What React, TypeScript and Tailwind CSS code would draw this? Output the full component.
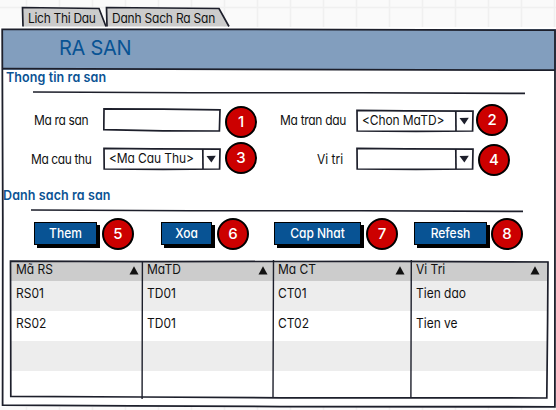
import type { ReactNode } from "react";

const INK = "#1d1f2b";

function T({ className = "", children }: { className?: string; children: ReactNode }) {
  return <span className={`inline-block origin-center scale-y-[1.1] whitespace-nowrap ${className}`}>{children}</span>;
}

function Badge({ n, className = "" }: { n: number; className?: string }) {
  return (
    <span
      className={`flex size-8 shrink-0 items-center justify-center rounded-full border-2 border-black bg-[#cc0000] pb-px text-[15px] leading-none font-medium text-white ${className}`}
    >
      {n}
    </span>
  );
}

function Tab({ width, slant, className, children }: { width: number; slant: number; className: string; children: ReactNode }) {
  return (
    <div className={`relative h-5 shrink-0 ${className}`}>
      <svg className="absolute inset-0 overflow-visible" width={width} height={20} fill="none">
        <path d={`M1 19.5 L.5 .5 L${width - slant} 1.5 L${width} 19.5Z`} fill="#cccccc" />
        <path d={`M1 19.5 L.5 .5 L${width - slant} 1.5 L${width} 19.5`} stroke={INK} strokeWidth="1.7" />
      </svg>
      <span className="relative block pt-1 pl-[6px] text-[12px] leading-4">{children}</span>
    </div>
  );
}

function Rule({ className }: { className: string }) {
  return (
    <svg className={`block h-1 w-[492px] ${className}`} viewBox="0 0 492 4">
      <path d="M0 1 L160 1.8 L330 1.7 L492 2.4" stroke={INK} strokeWidth="1.6" fill="none" />
    </svg>
  );
}

function Field({ select, tilt, className = "", children }: { select?: boolean; tilt?: boolean; className?: string; children?: ReactNode }) {
  return (
    <div className={`relative h-6 w-[118px] shrink-0 ${className}`}>
      <svg className="absolute inset-0" width="118" height="24" fill="none" stroke={INK} strokeWidth="1.7">
        {tilt ? (
          <path d="M1 .9 L60 1.2 L117 1.8 L116.4 23 L60 22.8 L.8 21.6Z" fill="white" />
        ) : (
          <path d="M1 1.4 L50 1.9 L117 2.2 L116.6 22 L60 22.4 L1.2 22Z" fill="white" />
        )}
        {select && <path d="M99.8 2 L100 22" />}
        {select && <path d="M103.5 9 L112.8 8.7 L108.4 15.5Z" fill={INK} stroke="none" />}
      </svg>
      <span className="relative block pt-1 pl-[6px] text-[12px] leading-4 whitespace-nowrap">
        {children && <T className="tracking-[-0.1px]">{children}</T>}
      </span>
    </div>
  );
}

function Button({ className, children }: { className: string; children: ReactNode }) {
  return (
    <button
      className={`h-[23px] shrink-0 border-[1.5px] border-black bg-[#085394] text-center text-[12px] leading-[19px] font-medium text-white shadow-[3px_3px_0_black] ${className}`}
    >
      <T>{children}</T>
    </button>
  );
}

const columns = [
  { title: "Mã RS", head: "pr-[3px]", cells: ["RS01", "RS02", "", ""] },
  { title: "MaTD", head: "pr-[5px]", cells: ["TD01", "TD01", "", ""] },
  { title: "Ma CT", head: "pr-[6px]", cells: ["CT01", "CT02", "", ""] },
  { title: "Vi Tri", head: "pr-[8px]", cells: ["Tien dao", "Tien ve", "", ""] },
];

function Table() {
  return (
    <div className="relative mt-[11px] ml-[11px] h-[138px] w-[538px]">
      <div className="grid h-[136px] grid-cols-[131px_131px_138px_137px] overflow-hidden">
        {columns.map((c) => (
          <div key={c.title} className="text-[12px] leading-4">
            <div className={`flex h-5 items-start justify-between bg-[#cccccc] pl-[5px] ${c.head}`}>
              <T className="mt-px">{c.title}</T>
              <svg width="10" height="9" className="mt-[5px]">
                <path d="M5 .2 L9.5 8.5 H.5Z" fill="#111" />
              </svg>
            </div>
            {c.cells.map((v, i) => (
              <div key={i} className="h-[30px] pt-[5px] pl-[5px] odd:bg-white even:bg-[#ededed]">
                <T>{v}</T>
              </div>
            ))}
          </div>
        ))}
      </div>
      <svg className="absolute inset-0 overflow-visible" width="538" height="138" fill="none" stroke={INK} strokeWidth="1.7">
        <path d="M-.5 .2 L140 .6 L390 .3 L537 1 L536.6 60 L535.8 137 L270 136.8 L130 136 L-.2 135.3 L-.3 70Z" />
        <path d="M131.4 1 L131.1 138 M262.5 -1 L262 136 M400.3 -1 L399.9 136.5" strokeWidth="1.4" />
      </svg>
    </div>
  );
}

export default function App() {
  return (
    <div className="relative h-[410px] w-[556px] overflow-hidden bg-[#fafafa] font-['Inter',sans-serif] text-[12px] text-[#111] [font-feature-settings:'cv11']">
      <svg className="absolute inset-0" width="556" height="410" stroke="#f0f0f0" strokeWidth="1.5">
        <path d="M26.5 0V410M59.5 0V410M92.5 0V410M125.5 0V410M158.5 0V410M191.5 0V410M224.5 0V410M257.5 0V410M290.5 0V410M323.5 0V410M356.5 0V410M389.5 0V410M422.5 0V410M455.5 0V410M488.5 0V410M521.5 0V410M554.5 0V410M0 7.5H556" />
      </svg>
      <div className="relative flex h-[27px] pt-[7px] pl-[22px]">
        <Tab width={84} slant={7} className="w-[84px]">
          <T className="tracking-[-0.3px]">Lich Thi Dau</T>
        </Tab>
        <Tab width={123} slant={10} className="w-[123px]">
          <T className="tracking-[-0.2px]">Danh Sach Ra San</T>
        </Tab>
      </div>
      <main className="relative h-[380px] bg-white pt-0.5">
        <svg className="absolute inset-0 z-10 overflow-visible" width="556" height="381" fill="none" stroke={INK} strokeWidth="1.8">
          <path d="M2.2 2.4 L240 2.4 L555 3.2 L554.9 379.8 L280 379.6 L130 378.8 L2.6 378.2 L2.8 190Z" />
          <path d="M2 41.6 L250 42.4 L555 43.2" />
        </svg>
        <header className="ml-0.5 flex h-[41px] items-center bg-[#829ebe] pl-[57px] text-[20px] leading-none text-[#085394]">
          <h1 className="-mt-[3px] tracking-[-0.3px]">RA SAN</h1>
        </header>
        <h2 className="pl-[6px] text-[12.5px] leading-4 font-semibold text-[#0b5394]">
          <T className="scale-y-[1.06] tracking-[0.1px]">Thong tin ra san</T>
        </h2>
        <Rule className="mt-[5px] ml-[33px]" />
        <div className="mt-[14px] flex h-[27px] items-start">
          <span className="w-[103px] pt-1 pl-[34px] leading-4"><T className="tracking-[-0.35px]">Ma ra san</T></span>
          <Field tilt className="-mt-px" />
          <Badge n={1} className="-mt-[3px] ml-1" />
          <span className="w-[99px] pt-1 pl-[23px] leading-4"><T className="tracking-[-0.3px]">Ma tran dau</T></span>
          <Field select>&lt;Chon MaTD&gt;</Field>
          <Badge n={2} className="-mt-[5px] ml-[2px]" />
        </div>
        <div className="mt-[12px] flex h-[27px] items-start">
          <span className="w-[103px] pt-1 pl-[31px] leading-4"><T className="tracking-[-0.4px]">Ma cau thu</T></span>
          <Field select className="-mt-px">&lt;Ma Cau Thu&gt;</Field>
          <Badge n={3} className="-mt-[6px] ml-1" />
          <span className="w-[99px] pt-1 pl-[60px] leading-4"><T>Vi tri</T></span>
          <Field select className="-mt-px" />
          <Badge n={4} className="-mt-1 ml-1" />
        </div>
        <h2 className="mt-[13px] pl-[3px] text-[12.5px] leading-4 font-semibold text-[#0b5394]">
          <T className="scale-y-[1.06] tracking-[0.1px]">Danh sach ra san</T>
        </h2>
        <Rule className="mt-[5px] ml-[31px]" />
        <div className="mt-[5px] flex h-8 items-start pl-[34px] [&>button]:mt-1">
          <Button className="w-[63px]">Them</Button>
          <Badge n={5} className="ml-[5px]" />
          <Button className="ml-[27px] w-[51px]">Xoa</Button>
          <Badge n={6} className="ml-[5px]" />
          <Button className="ml-[25px] w-[87px]">Cap Nhat</Button>
          <Badge n={7} className="ml-[5px]" />
          <Button className="ml-4 w-[73px]">Refesh</Button>
          <Badge n={8} className="ml-[4px]" />
        </div>
        <Table />
      </main>
    </div>
  );
}
